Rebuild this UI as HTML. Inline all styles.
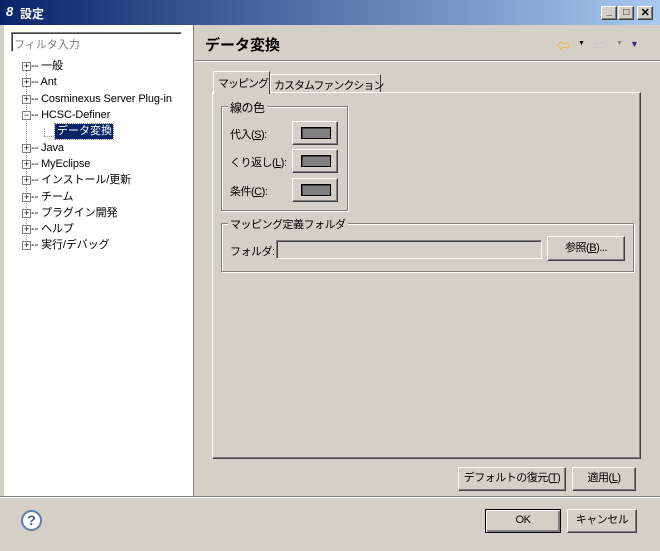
<!DOCTYPE html>
<html><head><meta charset="utf-8"><style>
*{box-sizing:border-box;margin:0;padding:0}
body{width:660px;height:551px;background:#d4d0c8;font-family:"Liberation Sans","Noto Sans CJK JP",sans-serif;font-size:11px;color:#000;position:relative;overflow:hidden;white-space:nowrap}
.a{position:absolute}
.btn{position:absolute;background:#d4d0c8;border:1px solid;border-color:#fff #404040 #404040 #fff;box-shadow:inset -1px -1px 0 #808080;text-align:center;font-size:11px;letter-spacing:-0.5px}
.sunk{border:1px solid;border-color:#808080 #fff #fff #808080;box-shadow:inset 1px 1px 0 #404040}
.grp{position:absolute;border:1px solid #808080;box-shadow:1px 1px 0 #fff, inset 1px 1px 0 #fff}
.leg{position:absolute;background:#d4d0c8;padding:0 2px;top:-8px;left:6px;letter-spacing:-0.5px}
.sw{position:absolute;left:8px;top:5px;width:30px;height:12px;background:#808080;border:1px solid #000;box-shadow:inset 1px 1px 0 #404040}
.exp{position:absolute;left:22px;width:9px;height:9px;border:1px solid #808080;background:#fff;font-size:9px;line-height:7px;text-align:center}
.ti{position:absolute;left:31px;font-size:11px;line-height:14px;letter-spacing:-0.1px}
.lb{letter-spacing:-0.5px}
</style></head><body>
<div class="a" style="left:0;top:0;width:660px;height:25px;background:linear-gradient(90deg,#0a246a,#a6caf0)"></div>
<div class="a" style="left:6px;top:4px;color:#fff;font-weight:bold;font-size:13px;font-style:italic">8</div>
<div class="a" style="left:20px;top:5px;color:#fff;font-weight:bold;font-size:12px">設定</div>
<div class="btn" style="left:601px;top:6px;width:16px;height:14px;font-size:10px;line-height:10px;font-weight:bold">_</div>
<div class="btn" style="left:618px;top:6px;width:16px;height:14px;font-size:10px;line-height:11px;font-weight:bold">□</div>
<div class="btn" style="left:637px;top:6px;width:16px;height:14px;font-size:11px;line-height:12px;font-weight:bold">✕</div>
<div class="a" style="left:4px;top:25px;width:190px;height:471px;background:#fff;border-right:1px solid #808080"></div>
<div class="a sunk" style="left:11px;top:32px;width:171px;height:20px;background:#fff;color:#808080;padding:3px 2px;font-size:11px">フィルタ入力</div>
<div class="a" style="left:26px;top:71px;height:175px;border-left:1px dotted #a0a0a0"></div>
<div class="a" style="left:44px;top:128px;height:8px;border-left:1px dotted #a0a0a0"></div>
<div class="a" style="left:44px;top:136px;width:10px;border-top:1px dotted #a0a0a0"></div>
<div class="exp" style="top:62px">+</div><div class="ti" style="top:59px">-- 一般</div>
<div class="exp" style="top:78px">+</div><div class="ti" style="top:75px">-- Ant</div>
<div class="exp" style="top:95px">+</div><div class="ti" style="top:92px">-- Cosminexus Server Plug-in</div>
<div class="exp" style="top:111px">−</div><div class="ti" style="top:108px">-- HCSC-Definer</div>
<div class="a" style="left:55px;top:124px;width:58px;height:15px;background:#0a246a;color:#fff;padding-left:2px;line-height:15px;outline:1px dotted #888;font-size:11px">データ変換</div>
<div class="exp" style="top:144px">+</div><div class="ti" style="top:141px">-- Java</div>
<div class="exp" style="top:160px">+</div><div class="ti" style="top:157px">-- MyEclipse</div>
<div class="exp" style="top:176px">+</div><div class="ti" style="top:173px">-- インストール/更新</div>
<div class="exp" style="top:193px">+</div><div class="ti" style="top:190px">-- チーム</div>
<div class="exp" style="top:209px">+</div><div class="ti" style="top:206px">-- プラグイン開発</div>
<div class="exp" style="top:225px">+</div><div class="ti" style="top:222px">-- ヘルプ</div>
<div class="exp" style="top:241px">+</div><div class="ti" style="top:238px">-- 実行/デバッグ</div>
<div class="a" style="left:205px;top:34px;font-size:15px;font-weight:bold">データ変換</div>
<div class="a" style="left:556px;top:36px;color:#e8b020;font-size:14px;font-weight:bold">⇦</div>
<div class="a" style="left:578px;top:40px;font-size:7px">▼</div>
<div class="a" style="left:594px;top:36px;color:#c8c8c8;font-size:14px;font-weight:bold">⇨</div>
<div class="a" style="left:616px;top:40px;font-size:7px;color:#888">▼</div>
<div class="a" style="left:630px;top:39px;font-size:9px;color:#303080">▼</div>
<div class="a" style="left:195px;top:60px;width:465px;border-top:1px solid #808080;border-bottom:1px solid #fff"></div>
<div class="a" style="left:212px;top:92px;width:429px;height:367px;border:1px solid;border-color:#fff #404040 #404040 #fff;box-shadow:inset -1px -1px 0 #808080"></div>
<div class="a" style="left:213px;top:71px;width:57px;height:23px;background:#d4d0c8;border:1px solid;border-color:#fff #404040 transparent #fff;border-bottom:none;padding:3px 0 0 4px;letter-spacing:-1px;font-size:11px">マッピング</div>
<div class="a" style="left:270px;top:74px;width:111px;height:18px;border:1px solid;border-color:#fff #404040 transparent #fff;border-bottom:none;padding:2px 0 0 3px;letter-spacing:-1px">カスタムファンクション</div>
<div class="grp" style="left:221px;top:106px;width:127px;height:105px"><span class="leg" style="font-size:12px">線の色</span></div>
<div class="a lb" style="left:230px;top:126px">代入(<u>S</u>):</div>
<div class="a lb" style="left:230px;top:154px">くり返し(<u>L</u>):</div>
<div class="a lb" style="left:230px;top:183px">条件(<u>C</u>):</div>
<div class="btn" style="left:292px;top:121px;width:46px;height:24px"><div class="sw"></div></div>
<div class="btn" style="left:292px;top:149px;width:46px;height:24px"><div class="sw"></div></div>
<div class="btn" style="left:292px;top:178px;width:46px;height:24px"><div class="sw"></div></div>
<div class="grp" style="left:221px;top:223px;width:413px;height:49px"><span class="leg">マッピング定義フォルダ</span></div>
<div class="a lb" style="left:230px;top:243px">フォルダ:</div>
<div class="a sunk" style="left:276px;top:240px;width:266px;height:19px"></div>
<div class="btn" style="left:547px;top:236px;width:78px;height:25px;line-height:22px">参照(<u>B</u>)...</div>
<div class="btn" style="left:458px;top:467px;width:108px;height:24px;line-height:21px">デフォルトの復元(<u>T</u>)</div>
<div class="btn" style="left:572px;top:467px;width:64px;height:24px;line-height:21px">適用(<u>L</u>)</div>
<div class="a" style="left:0;top:496px;width:660px;border-top:1px solid #808080;border-bottom:1px solid #fff"></div>
<div class="a" style="left:21px;top:510px;width:21px;height:21px;border-radius:50%;border:2px solid #5a7ab0;background:#fff;color:#3a5a90;font-weight:bold;font-size:14px;text-align:center;line-height:17px">?</div>
<div class="btn" style="left:485px;top:509px;width:76px;height:24px;line-height:21px;border-color:#000;box-shadow:inset 1px 1px 0 #fff,inset -2px -2px 0 #808080">OK</div>
<div class="btn" style="left:567px;top:509px;width:70px;height:24px;line-height:21px">キャンセル</div>
</body></html>
